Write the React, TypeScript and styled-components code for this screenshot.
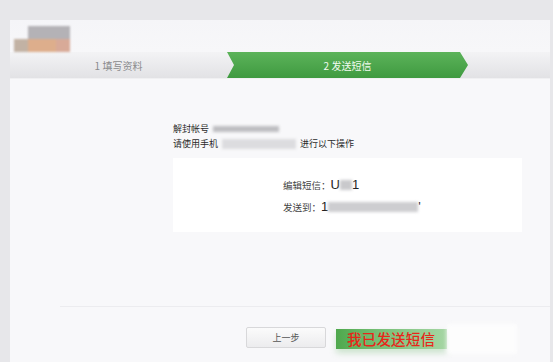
import React from "react";
import styled, { createGlobalStyle } from "styled-components";

const GlobalStyle = createGlobalStyle`
  html, body {
    margin: 0;
    padding: 0;
    background: #e7e7ea;
    font-family: "Noto Sans CJK SC", "Noto Sans", sans-serif;
  }
`;

const Page = styled.div`
  width: 553px;
  height: 362px;
  overflow: hidden;
  padding: 20px 3px 0 10px;
  box-sizing: border-box;
  display: flex;
`;

const Panel = styled.div`
  flex: 1;
  background: #f8f8fa;
  display: flex;
  flex-direction: column;
`;

const Header = styled.div`
  height: 32px;
  display: flex;
  align-items: center;
  padding-left: 4px;
  background: linear-gradient(180deg, #f5f5f8, #f7f7f9);
`;

const Blur = styled.span<{ $w: number; $h: number; $c: string }>`
  display: inline-block;
  width: ${(p) => p.$w}px;
  height: ${(p) => p.$h}px;
  background: ${(p) => p.$c};
  filter: blur(1.5px);
  vertical-align: middle;
`;

const Logo = styled.div`
  display: flex;
  flex-direction: column;
  width: 56px;
  height: 26px;
  margin-top: 6px;
  filter: blur(1px);
`;

const LogoTop = styled.div`
  height: 13px;
  margin-left: 14px;
  background: #b4b2b6;
`;

const LogoBottom = styled.div`
  height: 13px;
  background: linear-gradient(90deg, #c2b2a4 0 25%, #ddae8c 25% 75%, #d8aa98 75%);
`;

const StepBar = styled.div`
  height: 26px;
  display: flex;
  background: linear-gradient(180deg, #f3f3f5, #e2e2e5);
  border-bottom: 1px solid #f0f0f2;
`;

const Step = styled.div<{ $active?: boolean; $w: number }>`
  width: ${(p) => p.$w}px;
  display: flex;
  align-items: center;
  justify-content: center;
  font-size: 10px;
  color: ${(p) => (p.$active ? "#f2fbf0" : "#8a8a8c")};
  background: ${(p) =>
    p.$active ? "linear-gradient(180deg, #5cb35a, #3f9a40)" : "transparent"};
  clip-path: ${(p) =>
    p.$active
      ? "polygon(0 0, calc(100% - 8px) 0, 100% 50%, calc(100% - 8px) 100%, 0 100%, 7px 50%)"
      : "none"};
`;

const Body = styled.div`
  padding: 42px 0 0 163px;
  display: flex;
  flex-direction: column;
`;

const InfoLine = styled.div`
  font-size: 9px;
  line-height: 15px;
  color: #2a2a2a;
  display: flex;
  align-items: center;
  gap: 4px;
`;

const Box = styled.div`
  margin-top: 7px;
  width: 349px;
  height: 74px;
  box-sizing: border-box;
  background: #fff;
  padding: 16px 0 0 110px;
`;

const BoxLine = styled.div`
  font-size: 9.5px;
  line-height: 22px;
  color: #444;
  display: flex;
  align-items: center;
`;

const Big = styled.span`
  font-family: "Liberation Sans", sans-serif;
  font-size: 13px;
  color: #222;
`;

const Divider = styled.div`
  margin: 74px 0 0 50px;
  height: 1px;
  background: #ececef;
`;

const Footer = styled.div`
  display: flex;
  align-items: center;
  padding: 13px 0 0 236px;
`;

const BackButton = styled.div`
  width: 80px;
  height: 21px;
  box-sizing: border-box;
  border: 1px solid #d8d8da;
  border-radius: 2px;
  background: linear-gradient(180deg, #fbfbfb, #ececee);
  display: flex;
  align-items: center;
  justify-content: center;
  font-size: 9px;
  color: #555;
`;

const SentButton = styled.div`
  margin-left: 10px;
  width: 111px;
  height: 20px;
  margin-top: 3px;
  display: flex;
  align-items: center;
  padding-left: 11px;
  box-sizing: border-box;
  background: linear-gradient(90deg, #4ea84c 0%, #78c078 40%, #a6d6a4 100%);
  box-shadow: 0 4px 6px rgba(120, 190, 120, 0.35);
  font-size: 14.5px;
  font-weight: 500;
  color: #e8261a;
  letter-spacing: 0.2px;
`;

const Ghost = styled.div`
  width: 70px;
  height: 30px;
  margin-top: 4px;
  background: #fdfdfd;
  filter: blur(2px);
`;

export default function App() {
  return (
    <>
      <GlobalStyle />
      <Page>
        <Panel>
          <Header>
            <Logo>
              <LogoTop />
              <LogoBottom />
            </Logo>
          </Header>
          <StepBar>
            <Step $w={217}>1 填写资料</Step>
            <Step $w={241} $active>
              2 发送短信
            </Step>
          </StepBar>
          <Body>
            <InfoLine>
              解封帐号 <Blur $w={66} $h={6} $c="#bdbdc0" />
            </InfoLine>
            <InfoLine>
              请使用手机<Blur $w={74} $h={10} $c="#dcdcdf" />进行以下操作
            </InfoLine>
            <Box>
              <BoxLine>
                编辑短信：<Big>U</Big>
                <Blur $w={12} $h={10} $c="#c9c9cc" />
                <Big>1</Big>
              </BoxLine>
              <BoxLine>
                发送到：<Big>1</Big>
                <Blur $w={90} $h={10} $c="#cdcdd0" />
                <Big>'</Big>
              </BoxLine>
            </Box>
          </Body>
          <Divider />
          <Footer>
            <BackButton>上一步</BackButton>
            <SentButton>我已发送短信</SentButton>
            <Ghost />
          </Footer>
        </Panel>
      </Page>
    </>
  );
}
